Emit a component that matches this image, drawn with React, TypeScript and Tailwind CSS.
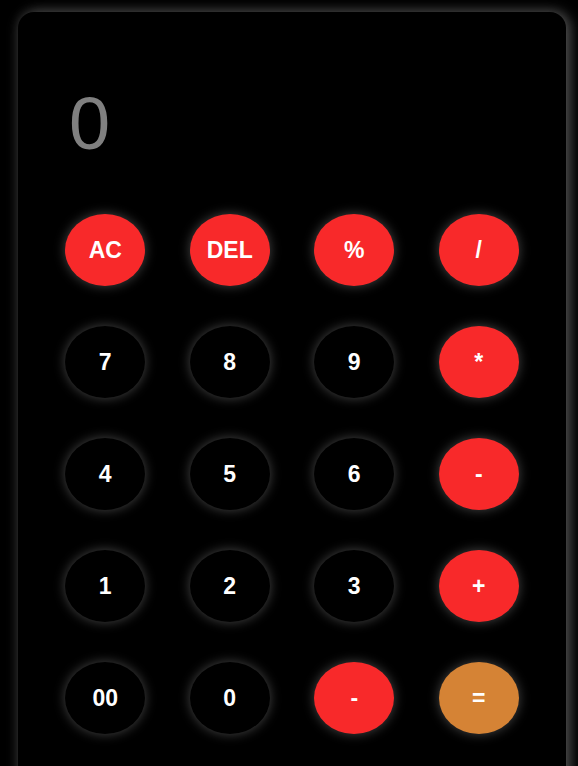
import React from "react";

type B = { label: string; kind: "red" | "dark" | "orange" };

const rows: B[][] = [
  [
    { label: "AC", kind: "red" },
    { label: "DEL", kind: "red" },
    { label: "%", kind: "red" },
    { label: "/", kind: "red" },
  ],
  [
    { label: "7", kind: "dark" },
    { label: "8", kind: "dark" },
    { label: "9", kind: "dark" },
    { label: "*", kind: "red" },
  ],
  [
    { label: "4", kind: "dark" },
    { label: "5", kind: "dark" },
    { label: "6", kind: "dark" },
    { label: "-", kind: "red" },
  ],
  [
    { label: "1", kind: "dark" },
    { label: "2", kind: "dark" },
    { label: "3", kind: "dark" },
    { label: "+", kind: "red" },
  ],
  [
    { label: "00", kind: "dark" },
    { label: "0", kind: "dark" },
    { label: "-", kind: "red" },
    { label: "=", kind: "orange" },
  ],
];

function Btn({ b }: { b: B }) {
  const color =
    b.kind === "red"
      ? "bg-[#f8292a]"
      : b.kind === "orange"
      ? "bg-[#d58335]"
      : "bg-black";
  return (
    <div className="flex justify-center">
      <button
        className={`${color} w-[80px] h-[72px] rounded-[50%] text-white font-bold text-[23px] flex items-center justify-center shadow-[0_0_12px_rgba(255,255,255,0.28)]`}
        style={{ fontFamily: "'Liberation Sans', Arial, sans-serif" }}
      >
        {b.label}
      </button>
    </div>
  );
}

export default function App() {
  return (
    <div className="bg-black min-h-[766px] h-[766px] overflow-hidden pt-[12px] pl-[18px] pr-[12px]">
      <div className="bg-black w-[548px] h-[800px] rounded-[16px] shadow-[4px_0_14px_rgba(255,255,255,0.28),0_0_14px_rgba(255,255,255,0.12)] px-[25px]">
        <div
          className="text-[#808080] text-[74px] leading-none pt-[75px] pl-[26px] h-[202px]"
          style={{ fontFamily: "'Liberation Sans', Arial, sans-serif" }}
        >
          0
        </div>
        <div className="flex flex-col gap-[40px]">
          {rows.map((r, i) => (
            <div key={i} className="grid grid-cols-4">
              {r.map((b, j) => (
                <Btn key={j} b={b} />
              ))}
            </div>
          ))}
        </div>
      </div>
    </div>
  );
}
